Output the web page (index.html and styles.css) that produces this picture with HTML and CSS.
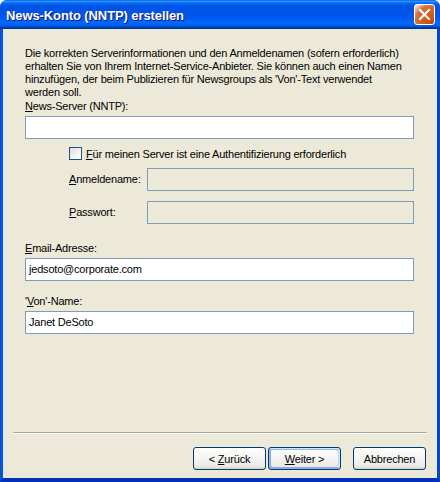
FILE: index.html
```html
<!DOCTYPE html>
<html lang="de">
<head>
<meta charset="utf-8">
<title>News-Konto (NNTP) erstellen</title>
<link rel="stylesheet" href="styles.css">
</head>
<body>
<div class="window">
  <div class="titlebar">
    <span class="title">News-Konto (NNTP) erstellen</span>
    <button class="close" aria-label="Schließen">
      <svg width="13" height="13" viewBox="0 0 13 13"><path d="M2 2 L11 11 M11 2 L2 11" stroke="#fff" stroke-width="2.2" stroke-linecap="square"/></svg>
    </button>
  </div>
  <div class="frame">
    <div class="content">
      <p class="intro">Die korrekten Serverinformationen und den Anmeldenamen (sofern erforderlich)<br>erhalten Sie von Ihrem Internet-Service-Anbieter. Sie können auch einen Namen<br>hinzufügen, der beim Publizieren für Newsgroups als 'Von'-Text verwendet<br>werden soll.</p>
      <label class="label label-server"><u>N</u>ews-Server (NNTP):</label>
      <div class="input"></div>

      <div class="check-row">
        <span class="checkbox"></span>
        <span class="check-label"><u>F</u>ür meinen Server ist eine Authentifizierung erforderlich</span>
      </div>
      <div class="auth-row auth-user">
        <span class="auth-label"><u>A</u>nmeldename:</span>
        <div class="input disabled"></div>
      </div>
      <div class="auth-row auth-pass">
        <span class="auth-label"><u>P</u>asswort:</span>
        <div class="input disabled"></div>
      </div>

      <label class="label label-email"><u>E</u>mail-Adresse:</label>
      <div class="input">jedsoto@corporate.com</div>

      <label class="label label-von">'<u>V</u>on'-Name:</label>
      <div class="input">Janet DeSoto</div>
    </div>
    <div class="footer">
      <div class="separator"></div>
      <div class="buttons">
        <button class="btn">&lt; <u>Z</u>urück</button>
        <button class="btn btn-default"><u>W</u>eiter &gt;</button>
        <button class="btn btn-cancel">Abbrechen</button>
      </div>
    </div>
  </div>
</div>
</body>
</html>
```
FILE: styles.css
```css
* { box-sizing: border-box; }
html, body { margin: 0; padding: 0; background: #fff; }
body {
  font-family: "Liberation Sans", Arial, sans-serif;
  font-size: 11px;
  letter-spacing: -0.2px;
  color: #000;
}
.window {
  width: 440px;
  height: 482px;
  display: flex;
  flex-direction: column;
  border-radius: 7px 7px 0 0;
  overflow: hidden;
  background: #0054E3;
}
.titlebar {
  height: 29px;
  flex: none;
  display: flex;
  align-items: center;
  justify-content: space-between;
  padding: 0 5px 0 6px;
  background: linear-gradient(180deg, #0058EE 0%, #3593FF 4%, #288EFF 6%, #127DFF 8%, #036FFC 10%, #0262EE 14%, #0057E5 20%, #0054E3 24%, #0055EB 56%, #005BF5 66%, #026AFE 76%, #0062EF 86%, #0052D6 92%, #0040AB 94%, #003092 100%);
}
.title {
  font-family: "Liberation Sans", Arial, sans-serif;
  font-weight: bold;
  font-size: 13px;
  color: #fff;
  text-shadow: 1px 1px #0F1089;
  letter-spacing: -0.1px;
  padding-top: 1px;
}
.close {
  width: 21px;
  height: 21px;
  padding: 0;
  border: 1px solid #fff;
  border-radius: 3px;
  background: radial-gradient(circle at 90% 90%, #CC4600 0%, #DC6527 55%, #CD7546 70%, #FFCCB2 90%, #fff 100%);
  display: flex;
  align-items: center;
  justify-content: center;
  margin-top: -1px;
}
.frame {
  flex: 1;
  display: flex;
  flex-direction: column;
  background: #ECE9D8;
  border-left: 3px solid #0055E5;
  border-right: 3px solid #0047D0;
  border-bottom: 4px solid #0031B8;
}
.content {
  flex: 1;
  padding: 18px 23px 0 22px;
  display: flex;
  flex-direction: column;
}
.intro {
  margin: 0;
  line-height: 13px;
  white-space: nowrap;
}
.label {
  display: block;
  line-height: 13px;
  height: 13px;
}
.label-server { margin-top: 1px; }
.label-email { margin-top: 18px; }
.label-von { margin-top: 14px; }
.input {
  height: 23px;
  margin-top: 3px;
  border: 1px solid #7F9DB9;
  background: #fff;
  padding: 0 3px;
  line-height: 21px;
  white-space: nowrap;
}
.input.disabled {
  background: #ECE9D8;
  margin-top: 0;
  flex: 1;
}
.check-row {
  display: flex;
  align-items: flex-start;
  margin-top: 8px;
  padding-left: 44px;
  height: 13px;
}
.checkbox {
  width: 13px;
  height: 13px;
  flex: none;
  border: 1px solid #1C5180;
  background: linear-gradient(135deg, #DCDCD7 0%, #F5F5F2 60%, #fff 100%);
}
.check-label {
  margin-left: 4px;
  line-height: 13px;
  margin-top: 1px;
  white-space: nowrap;
}
.auth-row {
  display: flex;
  align-items: center;
  padding-left: 44px;
  height: 23px;
}
.auth-user { margin-top: 8px; }
.auth-pass { margin-top: 10px; }
.auth-label {
  width: 78px;
  flex: none;
  line-height: 13px;
}
.footer {
  flex: none;
  padding-bottom: 8px;
}
.separator {
  margin: 0 10px;
  height: 2px;
  border-top: 1px solid #ACA899;
  border-bottom: 1px solid #fff;
}
.buttons {
  display: flex;
  justify-content: flex-end;
  margin-top: 13px;
  padding-right: 11px;
}
.btn {
  width: 73px;
  height: 23px;
  padding: 0;
  font-family: "Liberation Sans", Arial, sans-serif;
  font-size: 11px;
  letter-spacing: -0.2px;
  color: #000;
  border: 1px solid #003C74;
  border-radius: 3px;
  background: linear-gradient(180deg, #fff 0%, #ECEBE6 86%, #D6D0C5 100%);
}
.btn-default {
  margin-left: 2px;
  box-shadow: inset -1px 1px #CEE7FF, inset 1px 2px #98B8EA, inset -2px 2px #BCD4F6, inset 1px -1px #89ADE4, inset 2px -2px #89ADE4;
}
.btn-cancel { margin-left: 12px; }
u { text-decoration: underline; text-underline-offset: 1px; }
```
